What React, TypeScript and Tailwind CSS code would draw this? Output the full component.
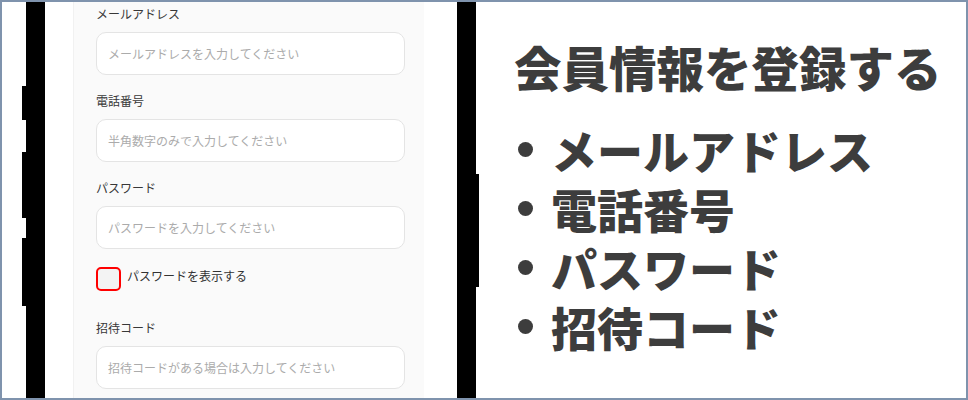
import React from 'react';

const fields = [
  { label: 'メールアドレス', placeholder: 'メールアドレスを入力してください' },
  { label: '電話番号', placeholder: '半角数字のみで入力してください' },
  { label: 'パスワード', placeholder: 'パスワードを入力してください' },
];

const points = ['メールアドレス', '電話番号', 'パスワード', '招待コード'];

const Field: React.FC<{ label: string; placeholder: string; className?: string }> = ({
  label,
  placeholder,
  className = '',
}) => (
  <div className={className}>
    <p className="text-[12px] leading-[18px] text-[#383838]">{label}</p>
    <div className="mt-[9px] flex h-[43px] items-center rounded-[10px] border border-[#e4e4e4] bg-white px-[11px]">
      <span className="text-[12px] text-[#ababab]">{placeholder}</span>
    </div>
  </div>
);

export default function App() {
  return (
    <div
      className="flex h-[400px] w-[968px] overflow-hidden border-2 border-[#7f93ad] bg-white"
      style={{ fontFamily: '"Noto Sans CJK JP", "Noto Sans", sans-serif' }}
    >
      {/* Phone mockup */}
      <div className="flex h-full shrink-0 pl-[20px]">
        {/* Left side buttons */}
        <div className="flex w-[4px] flex-col">
          <div className="mt-[84px] h-[34px] bg-black" />
          <div className="mt-[32px] h-[66px] bg-black" />
          <div className="mt-[20px] h-[68px] bg-black" />
        </div>
        <div className="h-full w-[19px] bg-black" />

        {/* Screen */}
        <div className="flex h-full w-[412px] bg-white pl-[28px] pr-[33px]">
          <div className="h-full flex-1 border-l border-[#f1f1f1] bg-[#fafafa] pl-[22px] pr-[19px] pt-[3px]">
            {fields.map((f, i) => (
              <Field key={f.label} label={f.label} placeholder={f.placeholder} className={i > 0 ? 'mt-[17px]' : ''} />
            ))}

            <div className="mt-[18px] flex items-center gap-[6px]">
              <div className="h-[24px] w-[25px] rounded-[5px] border-2 border-[#f00] bg-[#f3f3f3]" />
              <span className="-mt-[6px] text-[12px] text-[#333]">パスワードを表示する</span>
            </div>

            <Field label="招待コード" placeholder="招待コードがある場合は入力してください" className="mt-[28px]" />
          </div>
        </div>

        <div className="h-full w-[19px] bg-black" />
        {/* Right side button */}
        <div className="flex w-[3px] flex-col">
          <div className="mt-[172px] h-[113px] bg-black" />
        </div>
      </div>

      {/* Summary */}
      <div className="flex-1 pl-[35px] pt-[37px] text-[#3d3d3d]">
        <h1 className="text-[47.5px] font-black leading-[56px]">会員情報を登録する</h1>
        <ul className="mt-[25px]">
          {points.map((p) => (
            <li key={p} className="flex items-center text-[46px] font-black leading-[59px]">
              <span className="ml-[4px] mr-[18px] h-[15px] w-[15px] rounded-full bg-[#3d3d3d]" />
              {p}
            </li>
          ))}
        </ul>
      </div>
    </div>
  );
}
